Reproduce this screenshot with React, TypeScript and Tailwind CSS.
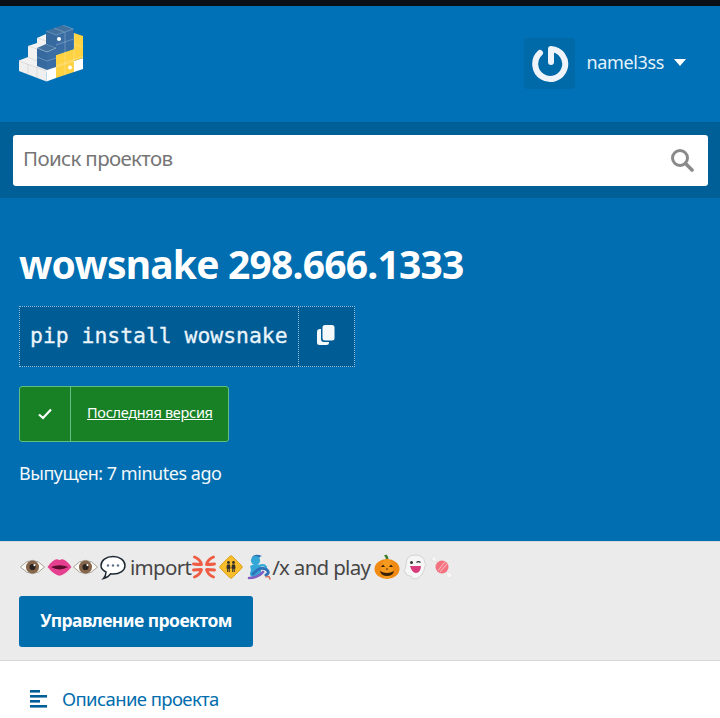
const sans = "font-['Noto_Sans','Open_Sans',sans-serif]";

function Logo() {
  return (
    <svg width="64" height="57" viewBox="19 25 64 57">
      {/* white blocks */}
      <polygon points="19,60.5 28,57 28,46 37,43 37,38 46,34 56,39 56,72 46.5,72 19,62" fill="#f2f2f2" />
      <polygon points="19,61 46.5,71 46.5,81.5 19,71" fill="#efefef" />
      <polygon points="46.5,71 56,67 56,78 46.5,81.5" fill="#ffffff" />
      <polygon points="74,61 83,58 83,69 74,72" fill="#ffffff" />
      {/* yellow */}
      <polygon points="56,55 74,49 74,33 83,36 83,58 74,61 74,72 56,78" fill="#ffd242" />
      {/* blue upper */}
      <polygon points="46,31 63,25 73.5,29 56,35" fill="#41729f" />
      <polygon points="46,31 56,35 56,48 46,44" fill="#366a9f" />
      <polygon points="56,35 73.5,29 73.5,49 56,55" fill="#3a6da3" />
      {/* blue lower */}
      <polygon points="37,48 46,44 56,48 47,52" fill="#41729f" />
      <polygon points="37,48 47,52 47,70 37,66" fill="#366a9f" />
      <polygon points="47,52 56,48 56,67 47,70" fill="#3a6da3" />
      {/* grid lines */}
      <g stroke="#ffffff" strokeOpacity="0.4" strokeWidth="0.6" fill="none">
        <path d="M54,28 L64,32 M63,25 L73,29 M65,32 V52 M56,45 L73.5,39 M37,57 L47,61 L56,58 M46,31 L56,35 L73.5,29 M37,48 L47,52 L56,48" />
        <path d="M56,66 L83,56 M65,52 V75 M74,33 V72 M56,67 L74,61 M74,44 L83,47" />
      </g>
      <g stroke="#b9b9b9" strokeOpacity="0.7" strokeWidth="0.5" fill="none">
        <path d="M28,57 L37,61 M28,64 V75 M37,67 V78 M28,46 L37,49 M37,38 L46,41 M19,61 L46.5,71" />
      </g>
      <circle cx="59" cy="39" r="2" fill="#ffffff" />
      <circle cx="70" cy="67.5" r="2" fill="#ffffff" />
    </svg>
  );
}

function Eye() {
  return (
    <svg width="25" height="20" viewBox="0 0 26 20" className="shrink-0">
      <path d="M0.5 10 Q13 -4 25.5 10 Q13 24 0.5 10Z" fill="#fbfaf7" stroke="#9a948a" strokeWidth="0.9" />
      <circle cx="13" cy="10" r="6.8" fill="#85664b" />
      <circle cx="13" cy="10" r="3.2" fill="#2a2320" />
      <circle cx="15" cy="8" r="1.1" fill="#ffffff" />
    </svg>
  );
}

function Lips() {
  return (
    <svg width="25" height="20" viewBox="0 0 26 20" className="shrink-0">
      <path d="M0.5 10 Q7 1 11 2 Q13 3.5 15 2 Q19 1 25.5 10 Q18 19 13 19 Q8 19 0.5 10Z" fill="#e5408f" />
      <path d="M4 10 Q13 6.5 22 10 Q13 15 4 10Z" fill="#5b0d2e" />
    </svg>
  );
}

function Speech() {
  return (
    <svg width="26" height="25" viewBox="0 0 26 25" className="shrink-0">
      <path d="M13 1.5 C20 1.5 25 5.5 25 10.5 C25 15.5 20 19 13 19 Q11.5 19 10.5 18.8 Q8 22.5 3.5 23.5 Q6 21 6 17 C3 15.5 1 13.5 1 10.5 C1 5.5 6 1.5 13 1.5Z" fill="#ffffff" stroke="#1f2933" strokeWidth="1.5" />
      <circle cx="8" cy="10.5" r="1.2" fill="#5a6f87" />
      <circle cx="13" cy="10.5" r="1.2" fill="#5a6f87" />
      <circle cx="18" cy="10.5" r="1.2" fill="#5a6f87" />
    </svg>
  );
}

function Anger() {
  return (
    <svg width="24" height="24" viewBox="0 0 24 24" className="shrink-0">
      <g fill="none" stroke="#ef5b43" strokeWidth="2.8" strokeLinecap="round" strokeLinejoin="round">
        <path d="M2.5 2 Q8.5 4.5 9.5 9.5 Q5 9.5 1.5 9" />
        <path d="M21.5 2 Q15.5 4.5 14.5 9.5 Q19 9.5 22.5 9" />
        <path d="M2.5 22 Q8.5 19.5 9.5 14.5 Q5 14.5 1.5 15" />
        <path d="M21.5 22 Q15.5 19.5 14.5 14.5 Q19 14.5 22.5 15" />
      </g>
    </svg>
  );
}

function Crossing() {
  return (
    <svg width="24" height="24" viewBox="0 0 24 24" className="shrink-0">
      <rect x="3.5" y="3.5" width="17" height="17" rx="2" transform="rotate(45 12 12)" fill="#f7bd2a" stroke="#d99a14" strokeWidth="0.8" />
      <g fill="#33302a">
        <circle cx="9.5" cy="7.5" r="1.4" />
        <circle cx="14.5" cy="7.5" r="1.4" />
        <path d="M8 9.5 h3 l0.6 4 h-0.8 v3.5 h-1 v-3 h-0.6 v3 h-1 v-3.5 h-0.8z" />
        <path d="M13 9.5 h3 l0.6 4 h-0.8 v3.5 h-1 v-3 h-0.6 v3 h-1 v-3.5 h-0.8z" />
      </g>
    </svg>
  );
}

function Genie() {
  return (
    <svg width="26" height="26" viewBox="0 0 26 26" className="shrink-0">
      <path d="M6 3 Q9 -1 16 2 Q12 3 13 7 L8 7Z" fill="#2b6fb3" />
      <circle cx="9.5" cy="6.5" r="4.6" fill="#35a7d6" />
      <path d="M4 12 Q9 9 14 11 L15 16 Q16 22 8 23 Q2 23 5 16Z" fill="#35a7d6" />
      <path d="M7 20 Q15 11 21 16 Q24 19 20 21" fill="none" stroke="#2f72b8" strokeWidth="3" strokeLinecap="round" />
      <path d="M3 24 Q12 24 17 18" fill="none" stroke="#7f5fc1" strokeWidth="2.6" strokeLinecap="round" />
      <path d="M20 23 q3 -2 4 2" fill="none" stroke="#d96a4f" strokeWidth="1.4" strokeLinecap="round" />
      <path d="M13 12 q5 -2 7 1" fill="none" stroke="#35a7d6" strokeWidth="2.2" strokeLinecap="round" />
    </svg>
  );
}

function Pumpkin() {
  return (
    <svg width="26" height="26" viewBox="0 0 26 26" className="shrink-0">
      <path d="M12 6 Q12 3 10 1.5 L12.5 0.5 Q15 3 14.5 6Z" fill="#3f7d2a" />
      <ellipse cx="13" cy="15" rx="12.5" ry="10" fill="#f08a12" />
      <ellipse cx="13" cy="15" rx="6" ry="10" fill="#f59a1e" />
      <path d="M7 13 l2 -2.5 2 2.5z M15 13 l2 -2.5 2 2.5z M11.8 15.5 l1.2 -1.5 1.2 1.5z" fill="#3a2208" />
      <path d="M6 17 Q13 21 20 17 Q19 22 13 22 Q7 22 6 17Z" fill="#3a2208" />
    </svg>
  );
}

function Ghost() {
  return (
    <svg width="24" height="26" viewBox="0 0 24 26" className="shrink-0">
      <path d="M3 11 Q3 1 12 1 Q21 1 22 9 Q24 10 22 12 Q21 20 15 24 Q12 26 9 24 Q9 22 7 22 Q3 22 3 19 Q1 19 1 17 Q3 15 3 11Z" fill="#f6f6f6" stroke="#d4d4d4" strokeWidth="1" />
      <circle cx="8.5" cy="8.5" r="1.5" fill="#333" />
      <path d="M13.5 8.5 q2 -2 4 0" stroke="#333" strokeWidth="1.2" fill="none" />
      <path d="M7 12 H18 Q17.5 19 13 19 Q9 19 7 12Z" fill="#d93a7a" />
    </svg>
  );
}

function Candy() {
  return (
    <svg width="24" height="24" viewBox="0 0 24 24" className="shrink-0">
      <path d="M7 7 L1 5 L2 3 L4 1 L6 2Z M17 17 L23 19 L21 22 L19 23 L16 21Z" fill="#f7f4f4" stroke="#dcdcdc" strokeWidth="0.5" />
      <circle cx="12" cy="12" r="6.5" fill="#f4727f" />
      <path d="M8 15.5 L15 7 M10 17 L17 9" stroke="#fbb3ba" strokeWidth="1.1" />
    </svg>
  );
}

export default function App() {
  return (
    <div className={`w-[720px] h-[718px] overflow-hidden bg-white ${sans}`}>
      <div className="h-[6px] bg-[#0b0f17]" />

      {/* Header */}
      <div className="h-[116px] bg-[#0071b6] flex items-start justify-between pl-[19px] pr-[34px]">
        <div className="pt-[19px]">
          <Logo />
        </div>
        <div className="flex items-center pt-[32px]">
          <div className="w-[51px] h-[51px] rounded bg-[#0069a8] flex items-center justify-center">
            <svg width="38" height="38" viewBox="0 0 38 38" fill="none" stroke="#eef4f9" strokeWidth="6" strokeLinecap="round" strokeLinejoin="round">
              <path d="M20 17 V4 A15 15 0 1 1 9 8" />
            </svg>
          </div>
          <span className="ml-[11px] mb-[3px] text-[18px] tracking-[-0.35px] text-[#e4f2fb]">namel3ss</span>
          <span className="ml-[10px] mb-[2px] w-0 h-0 border-x-[6.5px] border-x-transparent border-t-[7px] border-t-white" />
        </div>
      </div>

      {/* Search */}
      <div className="h-[76px] bg-[#005f96] pl-[13px] pr-[12px] flex items-center">
        <div className="w-full h-[51px] bg-white rounded-[3px] flex items-center justify-between pl-[10px] pr-[14px]">
          <span className="mb-[3px] text-[20.5px] tracking-[-0.65px] text-[#757575]">Поиск проектов</span>
          <svg width="24" height="24" viewBox="0 0 24 24" fill="none" stroke="#8a8a8a">
            <circle cx="10" cy="10" r="7.5" strokeWidth="3" />
            <path d="M15.5 15.5 L22 22" strokeWidth="3.6" strokeLinecap="round" />
          </svg>
        </div>
      </div>

      {/* Release banner */}
      <div className="h-[343px] bg-[#006eb0] px-[19px] pt-[39px]">
        <h1 className="text-[39px] leading-[54px] font-bold tracking-[-0.8px] text-white">wowsnake 298.666.1333</h1>
        <div className="mt-[15px] inline-flex h-[61px] bg-[#005c95] border border-dotted border-[#8fbfdc]">
          <div className="flex items-center pl-[10px] pr-[10px] text-[21.4px] font-['DejaVu_Sans_Mono',monospace] [-webkit-text-stroke:0.3px_#eaf4fa] text-[#eaf4fa]">
            pip install wowsnake
          </div>
          <div className="w-[56px] border-l border-dotted border-[#8fbfdc] flex items-center justify-center">
            <svg width="18" height="20" viewBox="0 0 18 20" fill="#f4f9fc" className="mb-[3px]">
              <rect x="5.5" y="0" width="12" height="15.5" rx="2.5" />
              <path d="M3 4 H4 V14 Q4 17 7 17 H12 V17.5 Q12 20 9.5 20 H2.5 Q0 20 0 17.5 V7 Q0 4 3 4Z" />
            </svg>
          </div>
        </div>
        <div className="mt-[19px] flex h-[56px] w-[210px] rounded-[3px] border border-[#62bd80] bg-[#188126]">
          <div className="w-[51px] border-r border-[#62bd80] flex items-center justify-center">
            <svg width="14" height="12" viewBox="0 0 14 12" fill="none" stroke="#ffffff" strokeWidth="2.2">
              <path d="M1 6.5 L5 10 L13 1.5" />
            </svg>
          </div>
          <a className="pl-[16px] pb-[3px] flex items-center text-[14.5px] tracking-[-0.3px] underline text-white">Последняя версия</a>
        </div>
        <p className="mt-[17px] text-[18px] leading-[28px] tracking-[-0.47px] text-[#f2f8fc]">Выпущен: 7 minutes ago</p>
      </div>

      {/* Summary */}
      <div className="h-[120px] bg-[#ebebeb] border-t border-[#d8d8d8] border-b px-[19px]">
        <div className="h-[50px] mb-[4px] flex items-center text-[20.5px] tracking-[-0.7px] text-[#464646]">
          <span className="flex items-center w-[107px] justify-between pl-[1px]">
            <Eye />
            <Lips />
            <Eye />
            <Speech />
          </span>
          <span className="ml-[4px]">import</span>
          <span className="ml-[1px]"><Anger /></span>
          <span className="ml-[3px]"><Crossing /></span>
          <span className="ml-[3px]"><Genie /></span>
          <span>/x and play</span>
          <span className="ml-[4px]"><Pumpkin /></span>
          <span className="ml-[3px]"><Ghost /></span>
          <span className="ml-[3px]"><Candy /></span>
        </div>
        <button className="w-[234px] h-[51px] pb-[2px] bg-[#006dad] rounded-[3px] text-[17.5px] font-bold tracking-[-0.55px] text-white">
          Управление проектом
        </button>
      </div>

      {/* Sidebar nav */}
      <div className="flex items-center pl-[30px] pt-[24px] text-[#006dad]">
        <svg width="18" height="18" viewBox="0 0 18 18" fill="#005f96">
          <rect x="0" y="0" width="10" height="2.6" />
          <rect x="0" y="5" width="17" height="2.6" />
          <rect x="0" y="10" width="10" height="2.6" />
          <rect x="0" y="15" width="17" height="2.6" />
        </svg>
        <span className="ml-[14px] text-[18.5px] tracking-[-0.6px]">Описание проекта</span>
      </div>
    </div>
  );
}
